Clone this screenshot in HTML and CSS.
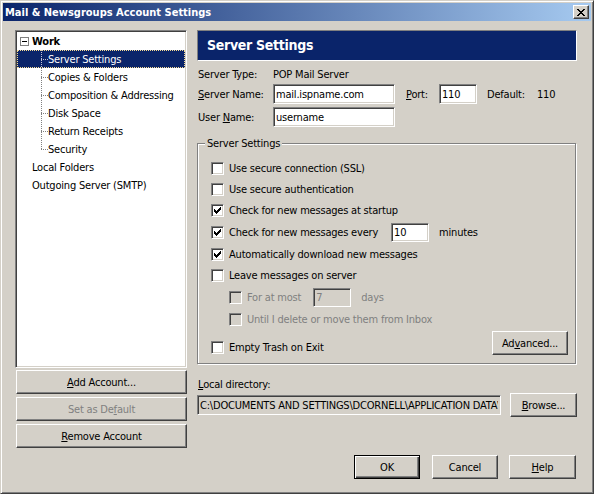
FILE: index.html
```html
<!doctype html>
<html>
  <head>
    <title>Mail &amp; Newsgroups Account Settings</title>
    <link rel="stylesheet" href="styles.css">
  </head>

  <body>
    <div class="window">
      <div class="titlebar">
        <span class="title">Mail &amp; Newsgroups Account Settings</span>
        <button class="close">
          <svg width="8" height="7" viewBox="0 0 8 7" shape-rendering="crispEdges">
            <path d="M0 0h2v1H0zM6 0h2v1H6zM1 1h2v1H1zM5 1h2v1H5zM2 2h4v1H2zM3 3h2v1H3zM2 4h4v1H2zM1 5h2v1H1zM5 5h2v1H5zM0 6h2v1H0zM6 6h2v1H6z" fill="#000"/>
          </svg>
        </button>
      </div>

      <div class="main">
        <div class="left">
          <div class="tree">
            <div class="item root">
              <svg width="9" height="9" viewBox="0 0 9 9" shape-rendering="crispEdges">
                <rect x="0.5" y="0.5" width="8" height="8" fill="#fff" stroke="#808080"/>
                <rect x="2" y="4" width="5" height="1" fill="#000"/>
              </svg>
              <b>Work</b>
            </div>
            <div class="item child sel">Server Settings</div>
            <div class="item child">Copies &amp; Folders</div>
            <div class="item child">Composition &amp; Addressing</div>
            <div class="item child">Disk Space</div>
            <div class="item child">Return Receipts</div>
            <div class="item child last">Security</div>
            <div class="item top">Local Folders</div>
            <div class="item top">Outgoing Server (SMTP)</div>
          </div>
          <button class="btn side"><u>A</u>dd Account...</button>
          <button class="btn side" disabled>Set as De<u>f</u>ault</button>
          <button class="btn side"><u>R</u>emove Account</button>
        </div>

        <div class="right">
          <div class="header">Server Settings</div>

          <div class="field first">
            <span class="lbl">Server Type:</span>
            <span>POP Mail Server</span>
          </div>
          <div class="field">
            <label class="lbl"><u>S</u>erver Name:</label>
            <input class="text wide" type="text" value="mail.ispname.com">
            <label class="port"><u>P</u>ort:</label>
            <input class="text port-in" type="text" value="110">
            <span class="default">Default:</span>
            <span>110</span>
          </div>
          <div class="field user">
            <label class="lbl">User <u>N</u>ame:</label>
            <input class="text wide" type="text" value="username">
          </div>

          <div class="group">
            <div class="legend">Server Settings</div>
            <div class="options">
              <div class="opt"><span class="cb"></span>Use secure connection (SSL)</div>
              <div class="opt"><span class="cb"></span>Use secure authentication</div>
              <div class="opt">
                <span class="cb"><svg width="7" height="7" viewBox="0 0 7 7" shape-rendering="crispEdges"><path d="M0 2h1v3H0zM1 3h1v3H1zM2 4h1v3H2zM3 3h1v3H3zM4 2h1v3H4zM5 1h1v3H5zM6 0h1v3H6z"/></svg></span>
                Check for new messages at startup
              </div>
              <div class="opt tall">
                <span class="cb"><svg width="7" height="7" viewBox="0 0 7 7" shape-rendering="crispEdges"><path d="M0 2h1v3H0zM1 3h1v3H1zM2 4h1v3H2zM3 3h1v3H3zM4 2h1v3H4zM5 1h1v3H5zM6 0h1v3H6z"/></svg></span>
                Check for new messages every
                <input class="text small minutes" type="text" value="10">
                <span class="unit">minutes</span>
              </div>
              <div class="opt">
                <span class="cb"><svg width="7" height="7" viewBox="0 0 7 7" shape-rendering="crispEdges"><path d="M0 2h1v3H0zM1 3h1v3H1zM2 4h1v3H2zM3 3h1v3H3zM4 2h1v3H4zM5 1h1v3H5zM6 0h1v3H6z"/></svg></span>
                Automatically download new messages
              </div>
              <div class="opt"><span class="cb"></span>Leave messages on server</div>
              <div class="opt tall sub off">
                <span class="cb"></span>For at most
                <input class="text small days" type="text" value="7" disabled>
                <span class="unit">days</span>
              </div>
              <div class="opt sub off"><span class="cb"></span>Until I delete or move them from Inbox</div>
            </div>
            <div class="last-row">
              <div class="opt trash"><span class="cb"></span>Empty Trash on Exit</div>
              <button class="btn advanced">Ad<u>v</u>anced...</button>
            </div>
          </div>

          <div class="dir-label"><u>L</u>ocal directory:</div>
          <div class="dir-row">
            <input class="text dir" type="text" readonly value="C:\DOCUMENTS AND SETTINGS\DCORNELL\APPLICATION DATA\MOZILLA\PROFILES">
            <button class="btn browse"><u>B</u>rowse...</button>
          </div>
        </div>
      </div>

      <div class="footer">
        <button class="btn ok">OK</button>
        <button class="btn">Cancel</button>
        <button class="btn help"><u>H</u>elp</button>
      </div>
    </div>
  </body>
</html>
```

FILE: styles.css
```css
body {
  margin: 0;
  font-family: "DejaVu Sans Condensed", "DejaVu Sans", sans-serif;
  font-size: 11px;
  line-height: 13px;
  letter-spacing: -0.2px;
  color: #000;
}

.window {
  width: 594px;
  height: 494px;
  box-sizing: border-box;
  background: #d4d0c8;
  border: 1px solid;
  border-color: #d4d0c8 #404040 #404040 #d4d0c8;
  box-shadow:
    inset 1px 1px 0 #fff,
    inset -1px -1px 0 #808080;
  padding: 2px;
}

/* title bar */
.titlebar {
  height: 18px;
  display: flex;
  align-items: center;
  justify-content: space-between;
  padding: 0 2px 0 2px;
  background: linear-gradient(to right, #0a246a, #a6caf0);
  color: #fff;
  font-weight: bold;
  letter-spacing: 0;
}

.close {
  width: 16px;
  height: 14px;
  padding: 0;
  display: flex;
  align-items: center;
  justify-content: center;
  background: #d4d0c8;
  border: 1px solid;
  border-color: #fff #404040 #404040 #fff;
  box-shadow: inset -1px -1px 0 #808080;
}

.main {
  display: grid;
  grid-template-columns: 172px 380px;
  column-gap: 10px;
  padding: 9px 0 0 12px;
}

/* left side */
.left {
  display: flex;
  flex-direction: column;
}

.tree {
  height: 338px;
  box-sizing: border-box;
  background: #fff;
  border: 1px solid;
  border-color: #808080 #fff #fff #808080;
  box-shadow:
    inset 1px 1px 0 #404040,
    inset -1px -1px 0 #d4d0c8;
  padding: 1px;
}

.item {
  height: 18px;
  display: flex;
  align-items: center;
  white-space: nowrap;
}

.root {
  padding-left: 3px;
  gap: 3px;
}

.child {
  --line: #808080;
  padding-left: 31px;
  background-image:
    repeating-linear-gradient(to bottom, var(--line) 0 1px, transparent 1px 2px),
    repeating-linear-gradient(to right, var(--line) 0 1px, transparent 1px 2px);
  background-size: 1px 18px, 7px 1px;
  background-position: 24px 0, 24px 9px;
  background-repeat: no-repeat;
}

.child.last {
  background-size: 1px 10px, 7px 1px;
}

.sel {
  --line: #c8c4d8;
  background-color: #0a246a;
  color: #fff;
  outline: 1px dotted #f5db95;
  outline-offset: -1px;
}

.top {
  padding-left: 15px;
}

.btn {
  font: inherit;
  letter-spacing: inherit;
  color: #000;
  background: #d4d0c8;
  height: 24px;
  padding: 0;
  border: 1px solid;
  border-color: #fff #404040 #404040 #fff;
  box-shadow: inset -1px -1px 0 #808080;
}

.btn:disabled {
  color: #808080;
}

.side {
  margin: 3px 0 0 1px;
  width: 171px;
}

.tree + .side {
  margin-top: 2px;
}

/* right side */
.header {
  height: 31px;
  box-sizing: border-box;
  display: flex;
  align-items: center;
  padding-left: 9px;
  background: #0a246a;
  color: #fff;
  border: 1px solid;
  border-color: #808080 #fff #fff #808080;
  font-size: 14px;
  font-weight: bold;
  letter-spacing: -0.3px;
}

.field {
  display: flex;
  align-items: center;
  height: 20px;
}

.field.first {
  margin-top: 3px;
}

.field.user {
  margin-top: 3px;
}

.lbl {
  width: 75px;
  padding-left: 1px;
  flex: none;
}

.text {
  font: inherit;
  letter-spacing: inherit;
  color: #000;
  height: 20px;
  box-sizing: border-box;
  margin: 0;
  padding: 0 2px;
  background: #fff;
  border: 1px solid;
  border-color: #808080 #fff #fff #808080;
  box-shadow:
    inset 1px 1px 0 #404040,
    inset -1px -1px 0 #d4d0c8;
  outline: none;
}

.text:disabled {
  background: #d4d0c8;
  color: #808080;
}

.wide {
  width: 122px;
}

.port {
  margin-left: 11px;
  width: 33px;
}

.port-in {
  width: 38px;
}

.default {
  margin-left: 10px;
  width: 50px;
}

.group {
  margin-top: 16px;
  width: 379px;
  box-sizing: border-box;
  border: 1px solid #808080;
  box-shadow:
    1px 1px 0 #fff,
    inset 1px 1px 0 #fff;
  padding: 0 7px 5px 13px;
}

.legend {
  width: max-content;
  margin: -7px 0 0 -6px;
  padding: 0 2px;
  background: #d4d0c8;
}

.options {
  margin-top: 8px;
}

.opt {
  display: flex;
  align-items: center;
  height: 21px;
  white-space: nowrap;
}

.opt.tall {
  height: 23px;
}

.opt.sub {
  padding-left: 18px;
}

.opt.off {
  color: #808080;
}

.cb {
  width: 13px;
  height: 13px;
  box-sizing: border-box;
  flex: none;
  display: flex;
  padding: 2px;
  margin-right: 5px;
  background: #fff;
  border: 1px solid;
  border-color: #808080 #fff #fff #808080;
  box-shadow:
    inset 1px 1px 0 #404040,
    inset -1px -1px 0 #d4d0c8;
}

.off .cb {
  background: #d4d0c8;
}

.small {
  width: 38px;
  height: 19px;
}

.minutes {
  margin-left: 13px;
}

.days {
  margin-left: 12px;
}

.unit {
  margin-left: 10px;
}

.last-row {
  margin-top: 1px;
  display: flex;
  justify-content: space-between;
  align-items: flex-start;
}

.trash {
  margin-top: 6px;
}

.advanced {
  width: 76px;
}

.dir-label {
  margin-top: 14px;
  padding-left: 1px;
}

.dir-row {
  margin-top: 2px;
  display: flex;
  align-items: center;
  gap: 9px;
}

.dir {
  width: 304px;
  background: #d4d0c8;
}

.browse {
  width: 67px;
}

/* bottom buttons */
.footer {
  display: flex;
  justify-content: flex-end;
  gap: 11px;
  margin-top: 7px;
  padding-right: 15px;
}

.footer .btn {
  width: 66px;
}

.footer .help {
  width: 67px;
}

.footer .ok {
  margin-right: 1px;
  border: 1px solid #000;
  box-shadow:
    inset 1px 1px 0 #fff,
    inset -1px -1px 0 #404040,
    inset -2px -2px 0 #808080;
}
```
